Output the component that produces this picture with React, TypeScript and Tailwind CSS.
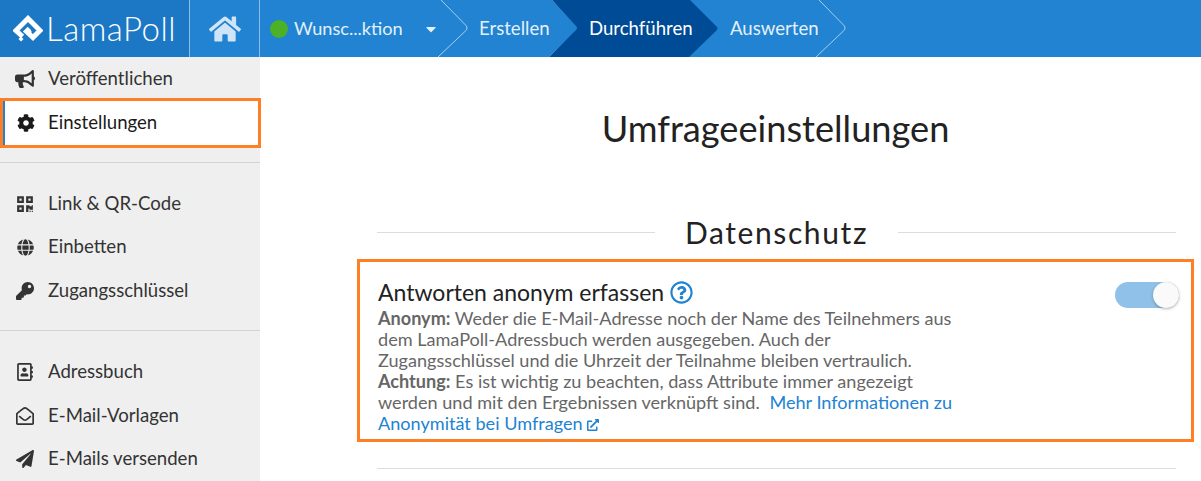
import { FaHome, FaCaretDown, FaBullhorn, FaCog, FaQrcode, FaGlobe, FaKey, FaRegAddressBook, FaRegEnvelopeOpen, FaPaperPlane, FaExternalLinkAlt, FaRegQuestionCircle } from 'react-icons/fa'
import type { ReactNode } from 'react'

function Logo() {
  return (
    <svg width="30" height="27" viewBox="0 0 30 27" className="shrink-0 text-white">
      <path d="M9.5 21.5 L3 15.5 L15 3.5 L27 15.5 L20 22.5 L13.5 16.5 L16.5 13.5" fill="none" stroke="currentColor" strokeWidth="5" />
      <path d="M15 13 L19 17 L15 20 L11.5 17 Z" fill="currentColor" />
      <path d="M5.5 24 L8 21.5 L10.5 24 L8 26.5 Z" fill="currentColor" />
    </svg>
  )
}

function Chevron() {
  return (
    <svg width="30" height="57" viewBox="0 0 30 57" className="absolute right-[-1px] top-0" fill="none">
      <path d="M3 0 L28.5 26 Q29.5 28 28.5 30 L0 57" stroke="#a9cdec" strokeWidth="1" />
    </svg>
  )
}

function Step({ label, width, pad, active }: { label: string; width: string; pad: string; active?: boolean }) {
  return (
    <div className={`relative flex h-full shrink-0 items-center ${width} ${pad}`}>
      {active && (
        <svg width="170" height="57" viewBox="0 0 170 57" className="absolute right-0 top-0">
          <path d="M3 0 L141 0 L168 27 Q169 28 168 30 L140 57 L0 57 L27 30 Q29 28 27 26 Z" fill="#004b96" />
        </svg>
      )}
      {!active && <Chevron />}
      <span className={`relative text-[18.6px] ${active ? 'text-white' : 'text-[#e3f0fa]'}`}>{label}</span>
    </div>
  )
}

function NavItem({ icon, label }: { icon: ReactNode; label: string }) {
  return (
    <div className="flex h-[43.6px] items-center text-[#333]">
      <span className="flex w-[48px] shrink-0 justify-center pl-[2px] text-[#333]">{icon}</span>
      <span className="text-[18.6px]">{label}</span>
    </div>
  )
}

export default function App() {
  return (
    <div className="flex h-screen w-full flex-col overflow-hidden bg-white font-['Lato',sans-serif]">
      <header className="flex h-[57px] shrink-0 bg-[#2183d1]">
        <div className="flex w-[190px] shrink-0 items-center gap-[3px] border-r border-[#8dbde6] bg-[#1c78c5] pl-[13px] text-white">
          <Logo />
          <span className="text-[33px] leading-none font-light tracking-[0.5px]">LamaPoll</span>
        </div>
        <div className="flex w-[70px] shrink-0 items-center justify-center border-r border-[#8dbde6] text-[#cfe5f7]">
          <FaHome size={32} />
        </div>
        <div className="relative flex w-[207px] shrink-0 items-center pl-[10px] text-[#e3f0fa]">
          <Chevron />
          <span className="h-[18px] w-[18px] rounded-full bg-[#4cb127]" />
          <span className="ml-[6px] text-[18.2px]">Wunsc...ktion</span>
          <FaCaretDown size={16} className="ml-[20px]" />
        </div>
        <Step label="Erstellen" width="w-[111px]" pad="pl-[12px]" />
        <Step label="Durchführen" width="w-[141px]" pad="pl-[11px]" active />
        <Step label="Auswerten" width="w-[126px]" pad="pl-[11px]" />
      </header>

      <div className="flex min-h-0 flex-1">
        <aside className="relative z-10 w-[260px] shrink-0 bg-[#efefef]">
          <div className="flex h-[41px] items-center pt-[2px] text-[#333]">
            <span className="flex w-[48px] shrink-0 justify-center pl-[2px]"><FaBullhorn size={20} /></span>
            <span className="text-[18.6px]">Veröffentlichen</span>
          </div>
          <div className="flex h-[50px] w-[261px] items-center border-[3px] border-[#ff7f27] bg-white text-[#1a1a1a] shadow-[inset_2px_0_0_#2183d1]">
            <span className="flex w-[45px] shrink-0 justify-center"><FaCog size={18} /></span>
            <span className="text-[18.6px]">Einstellungen</span>
          </div>
          <div className="mt-[14px] border-t border-[#d4d4d4] pt-[19px] pb-[17px]">
            <NavItem icon={<FaQrcode size={18} />} label="Link & QR-Code" />
            <NavItem icon={<FaGlobe size={17} />} label="Einbetten" />
            <NavItem icon={<FaKey size={18} />} label="Zugangsschlüssel" />
          </div>
          <div className="border-t border-[#d4d4d4] pt-[19.4px]">
            <NavItem icon={<FaRegAddressBook size={18} />} label="Adressbuch" />
            <NavItem icon={<FaRegEnvelopeOpen size={18} />} label="E-Mail-Vorlagen" />
            <NavItem icon={<FaPaperPlane size={18} />} label="E-Mails versenden" />
          </div>
        </aside>

        <main className="min-w-0 flex-1 pt-[47px] pl-[97px] pr-[8px]">
          <h1 className="w-[837px] text-center text-[36.2px] leading-[48px] font-normal text-[#222]">Umfrageeinstellungen</h1>
          <div className="mt-[60px] flex w-[799px] translate-x-[20px] items-center gap-[30px]">
            <div className="h-px flex-1 bg-[#ddd]" />
            <h2 className="text-[30px] leading-[40px] font-normal tracking-[1.6px] text-[#222]">Datenschutz</h2>
            <div className="h-px flex-1 bg-[#ddd]" />
          </div>
          <section className="mt-[7px] flex h-[183px] w-[837px] items-start justify-between border-[3px] border-[#ff7f27] pt-[16px] pr-[12px] pl-[18px]">
            <div className="w-[582px]">
              <div className="mb-[2px] flex items-center gap-[6px] text-[23px] leading-[28px] text-[#222]">
                Antworten anonym erfassen
                <FaRegQuestionCircle size={23} className="text-[#2183d1]" />
              </div>
              <p className="text-[18.1px] leading-[21px] text-[#666]">
                <b>Anonym:</b> Weder die E-Mail-Adresse noch der Name des Teilnehmers aus dem LamaPoll-Adressbuch werden ausgegeben. Auch der Zugangsschlüssel und die Uhrzeit der Teilnahme bleiben vertraulich.<br />
                <b>Achtung:</b> Es ist wichtig zu beachten, dass Attribute immer angezeigt werden und mit den Ergebnissen verknüpft sind.{' '}
                <span className="ml-[5px] text-[#2183d1]">Mehr Informationen zu Anonymität bei Umfragen <FaExternalLinkAlt size={12} className="inline align-[-1px]" /></span>
              </p>
            </div>
            <div className="relative mt-[4px] h-[26px] w-[64px] rounded-full bg-[#90c1e8]">
              <div className="absolute top-0 right-0 h-[26px] w-[26px] rounded-full bg-[#fafafa] shadow-[0_1px_3px_rgba(0,0,0,0.3)]" />
            </div>
          </section>
          <div className="mt-[26px] h-px w-[799px] translate-x-[20px] bg-[#ddd]" />
        </main>
      </div>
    </div>
  )
}
